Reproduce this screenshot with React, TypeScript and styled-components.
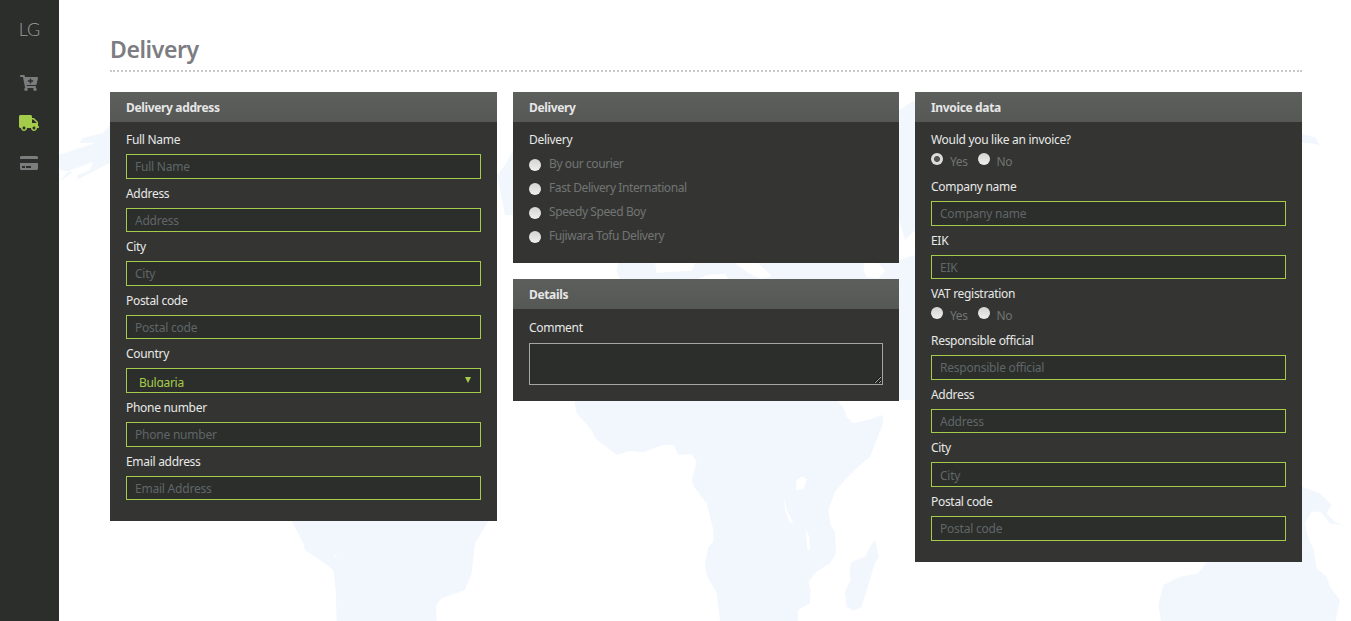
import React from 'react'
import styled, { createGlobalStyle } from 'styled-components'
import { FaCartPlus, FaCreditCard, FaTruck } from 'react-icons/fa'

const green = '#a4cc4a'

const GlobalStyle = createGlobalStyle`
  html, body {
    margin: 0;
    height: 100%;
    background: #fff;
    font-family: "Noto Sans", "Open Sans", sans-serif;
    font-size: 12px;
    overflow: hidden;
  }
`

const Page = styled.div`
  position: relative;
  display: flex;
  min-height: 621px;
`
const Sidebar = styled.nav`
  flex: none;
  width: 59px;
  background: #2c2e2b;
  display: flex;
  flex-direction: column;
  align-items: center;
  position: relative;
  z-index: 1;
`
const Logo = styled.div`
  margin-top: 17px;
  height: 24px;
  line-height: 24px;
  font-family: "Lato", sans-serif;
  font-weight: 300;
  font-size: 18px;
  color: #9a9e9f;
`
const NavItem = styled.a<{ $active?: boolean; $size: number }>`
  display: flex;
  box-sizing: border-box;
  width: 100%;
  height: 40px;
  padding-right: 2px;
  align-items: center;
  justify-content: center;
  color: ${(p) => (p.$active ? green : '#7b7c7e')};
  font-size: ${(p) => p.$size}px;
  &:first-of-type {
    margin-top: 22px;
  }
`
const WorldMap = styled.svg`
  position: absolute;
  left: 0;
  top: 0;
  width: 1351px;
  height: 621px;
  fill: #f2f7fe;
`
const Main = styled.main`
  position: relative;
  flex: 1;
  padding: 0 49px 0 51px;
`
const Title = styled.h1`
  margin: 0;
  padding-top: 34px;
  height: 36px;
  line-height: 30px;
  font-size: 23px;
  font-weight: 600;
  color: #7c7c82;
  border-bottom: 2px dotted #c9c9cb;
  letter-spacing: -0.4px;
`
const Columns = styled.div`
  display: grid;
  grid-template-columns: 387px 386px 387px;
  gap: 16px;
  margin-top: 20px;
  align-items: start;
`
const Column = styled.div`
  display: flex;
  flex-direction: column;
  gap: 16px;
`
const Panel = styled.section`
  background: #343532;
`
const PanelHeader = styled.h2`
  margin: 0;
  height: 30px;
  line-height: 32px;
  padding: 0 16px;
  font-size: 12px;
  font-weight: 700;
  color: #e6e6e6;
  letter-spacing: -0.35px;
  background: linear-gradient(to bottom, #5d5f5d, #565855);
`
const PanelBody = styled.div<{ $top?: number; $bottom: number }>`
  padding: ${(p) => p.$top ?? 10}px 16px ${(p) => p.$bottom}px;
`
const Field = styled.div`
  margin-bottom: 7px;
`
const Label = styled.label`
  display: block;
  height: 22px;
  line-height: 16px;
  color: #e8e8e8;
  letter-spacing: -0.3px;
`
const inputStyle = `
  display: block;
  box-sizing: border-box;
  width: 100%;
  height: 24.6px;
  margin: 0;
  border: 1px solid ${green};
  border-radius: 0;
  outline: none;
  background: #2c2e2b;
  font-family: inherit;
  font-size: 12px;
  letter-spacing: -0.3px;
`
const Input = styled.input`
  ${inputStyle}
  padding: 1px 8px 0;
  color: #e8e8e8;
  &::placeholder {
    color: #5f6669;
    opacity: 1;
    letter-spacing: -0.22px;
  }
`
const SelectWrap = styled.div`
  position: relative;
`
const Select = styled.select`
  ${inputStyle}
  appearance: none;
  padding: 5px 0 5px 12px;
  color: ${green};
`
const SelectArrow = styled.span`
  position: absolute;
  right: 10px;
  top: 9px;
  width: 0;
  height: 0;
  border-left: 3px solid transparent;
  border-right: 3px solid transparent;
  border-top: 6px solid ${green};
  pointer-events: none;
`
const TextArea = styled.textarea`
  ${inputStyle}
  height: 42px;
  margin-top: 1px;
  border-color: #a5a6a4;
  color: #e8e8e8;
  padding: 4px 8px;
`
const RadioColumn = styled.div`
  display: flex;
  flex-direction: column;
  margin-top: -2px;
`
const RadioRow = styled.div`
  display: flex;
  height: 18px;
  gap: 10px;
`
const RadioOption = styled.label<{ $stacked?: boolean }>`
  display: flex;
  align-items: ${(p) => (p.$stacked ? 'center' : 'flex-start')};
  height: ${(p) => (p.$stacked ? '24px' : 'auto')};
  gap: ${(p) => (p.$stacked ? '8px' : '7px')};
  color: #727474;
  letter-spacing: -0.4px;
  line-height: 16px;
`
const RadioText = styled.span`
  display: block;
`
const Radio = styled.input.attrs({ type: 'radio' })<{ $stacked?: boolean }>`
  appearance: none;
  flex: none;
  width: 12px;
  height: 12px;
  margin: ${(p) => (p.$stacked ? '1px 0 0' : '-1px 0 0')};
  border-radius: 50%;
  background: linear-gradient(to bottom, #d4d4d4, #efefef);
  &:checked {
    background: radial-gradient(circle, #555 0 2.6px, #dcdcdc 3.4px);
  }
`

const deliveryFields = [
  ['Full Name', 'Full Name'],
  ['Address', 'Address'],
  ['City', 'City'],
  ['Postal code', 'Postal code'],
]
const contactFields = [
  ['Phone number', 'Phone number'],
  ['Email address', 'Email Address'],
]
const couriers = ['By our courier', 'Fast Delivery International', 'Speedy Speed Boy', 'Fujiwara Tofu Delivery']
const invoiceFields = [
  ['Responsible official', 'Responsible official'],
  ['Address', 'Address'],
  ['City', 'City'],
  ['Postal code', 'Postal code'],
]

const TextField = ({ label, placeholder }: { label: string; placeholder: string }) => (
  <Field>
    <Label>{label}</Label>
    <Input placeholder={placeholder} readOnly />
  </Field>
)

const YesNo = ({ name, yes }: { name: string; yes?: boolean }) => (
  <RadioRow>
    <RadioOption>
      <Radio name={name} defaultChecked={yes} />
      <RadioText>Yes</RadioText>
    </RadioOption>
    <RadioOption>
      <Radio name={name} />
      <RadioText>No</RadioText>
    </RadioOption>
  </RadioRow>
)

// the faint world map behind the page, traced in crop coordinates
const MapShapes = () => (
  <WorldMap viewBox="0 0 1351 621">
    <g transform="translate(500 400) scale(0.3333)">
      <path d="M222 -3L1010 -3C1030 25 1040 35 1040 50L1060 70L1110 58L1148 45L1150 70L1110 170L1075 200L1040 235L1005 275L985 330L992 375L1005 395L1008 460L990 490L950 515L925 545L932 570L930 610L895 630L893 663L660 663L650 580L620 525L615 490L625 440L640 425L640 390L620 310L585 265L575 240L590 185L575 163L535 165L520 135L490 135L430 157L390 153L350 165L285 115L275 90L230 40Z" />
      <path d="M1125 420L1137 470L1125 490L1085 620L1060 632L1040 620L1035 575L1052 540L1048 510L1055 485L1095 470L1110 440Z" />
      <path fill="#fff" d="M890 240L905 230L922 237L910 268L888 270ZM852 290L860 330L880 368L870 368L855 330ZM917 385L928 410L930 450L922 450Z" />
    </g>
    <g transform="translate(270 510) scale(0.3333)">
      <path d="M65 33L100 100L105 120L150 150L190 180L197 240L200 333L500 333L498 285L515 265L585 240L605 190L615 100L655 33Z" />
      <path fill="#fff" d="M190 130L200 140L198 146Z" />
    </g>
    <g transform="translate(1100 480) scale(0.3333)">
      <path d="M606 20L660 40L695 75L680 100L705 125L735 138L690 130L670 105L660 95L635 95L615 130L625 175L640 205L650 265L680 290L690 320L720 360L707 423L183 423L175 375L190 315L240 290L295 280L320 245L606 245Z" />
    </g>
    <g transform="translate(50 120) scale(1)">
      <path d="M9 35L30 28L45 23L30 23L32 18L53 13L60 5L60 43L50 48L42 52L27 60L28 55L40 50L43 42L27 48L20 50L9 62L23 52L10 50Z" />
    </g>
    <g transform="translate(1295 90) scale(0.3333)">
      <path d="M21 132L60 142L75 165L45 160L21 158Z" />
    </g>
    <path d="M497 175L505 165L513 150L513 215L505 215ZM899 110L915 100L915 230L905 240L899 220ZM899 260L915 255L915 400L899 400Z" />
    <g transform="translate(495 258) scale(0.3333)">
      <path d="M370 15L1260 15L1260 63L375 63L365 40Z" />
      <path fill="#fff" d="M480 15L600 15L590 38L520 42L485 45ZM610 63L640 50L690 48L700 63ZM720 15L790 15L830 55L800 63L760 45ZM1110 15L1150 15L1170 40L1150 60L1115 58L1105 35Z" />
    </g>
  </WorldMap>
)

export default function App() {
  return (
    <Page>
      <GlobalStyle />
      <MapShapes />
      <Sidebar>
        <Logo>LG</Logo>
        <NavItem $size={18}><FaCartPlus /></NavItem>
        <NavItem $size={20} $active><FaTruck /></NavItem>
        <NavItem $size={18}><FaCreditCard /></NavItem>
      </Sidebar>
      <Main>
        <Title>Delivery</Title>
        <Columns>
          <Panel>
            <PanelHeader>Delivery address</PanelHeader>
            <PanelBody $bottom={13.5}>
              {deliveryFields.map(([label, placeholder]) => (
                <TextField key={label} label={label} placeholder={placeholder} />
              ))}
              <Field>
                <Label>Country</Label>
                <SelectWrap>
                  <Select defaultValue="Bulgaria">
                    <option>Bulgaria</option>
                  </Select>
                  <SelectArrow />
                </SelectWrap>
              </Field>
              {contactFields.map(([label, placeholder]) => (
                <TextField key={label} label={label} placeholder={placeholder} />
              ))}
            </PanelBody>
          </Panel>
          <Column>
            <Panel>
              <PanelHeader>Delivery</PanelHeader>
              <PanelBody $bottom={15}>
                <Label as="div">Delivery</Label>
                <RadioColumn>
                  {couriers.map((name) => (
                    <RadioOption key={name} $stacked>
                      <Radio name="courier" $stacked />
                      <RadioText>{name}</RadioText>
                    </RadioOption>
                  ))}
                </RadioColumn>
              </PanelBody>
            </Panel>
            <Panel>
              <PanelHeader>Details</PanelHeader>
              <PanelBody $top={11} $bottom={16}>
                <Label>Comment</Label>
                <TextArea />
              </PanelBody>
            </Panel>
          </Column>
          <Panel>
            <PanelHeader>Invoice data</PanelHeader>
            <PanelBody $bottom={14}>
              <Field>
                <Label as="div">Would you like an invoice?</Label>
                <YesNo name="invoice" yes />
              </Field>
              <TextField label="Company name" placeholder="Company name" />
              <TextField label="EIK" placeholder="EIK" />
              <Field>
                <Label as="div">VAT registration</Label>
                <YesNo name="vat" />
              </Field>
              {invoiceFields.map(([label, placeholder]) => (
                <TextField key={label} label={label} placeholder={placeholder} />
              ))}
            </PanelBody>
          </Panel>
        </Columns>
      </Main>
    </Page>
  )
}
